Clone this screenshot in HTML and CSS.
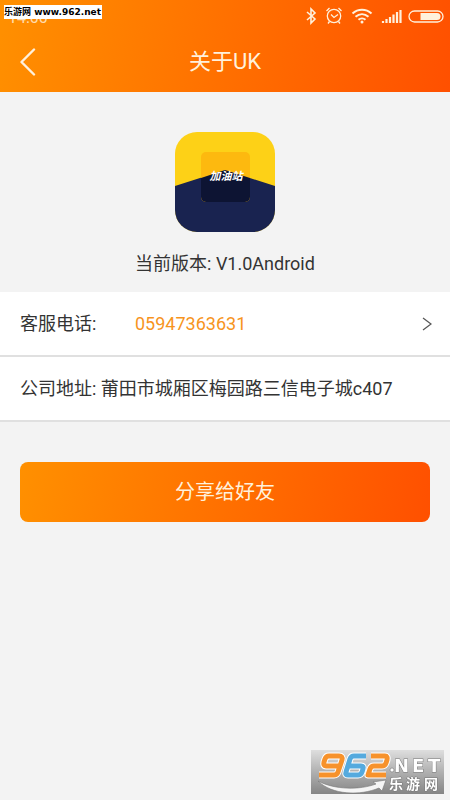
FILE: index.html
```html
<!DOCTYPE html>
<html lang="zh-CN">
<head>
<meta charset="utf-8">
<meta name="viewport" content="width=device-width, initial-scale=1">
<title>关于UK</title>
<link rel="stylesheet" href="styles.css">
</head>
<body>
<header class="header">
  <div class="status">
    <span class="clock">14:00</span>
    <svg class="status-icons" width="140" height="20" viewBox="0 0 140 20" fill="none" stroke="currentColor" aria-hidden="true">
      <path d="M3 6l8 7-4 4V3l4 4-8 7" stroke-width="1.6"/>
      <circle cx="30" cy="10" r="6.700" stroke-width="1.300"/>
      <path d="M27 8.500l3 3 4-3M22.500 5l3-3M37.500 5l-3-3M25.500 15.500l-1.500 2M34.500 15.500l1.500 2" stroke-width="1.300"/>
      <path d="M48.500 7.500c5.500-5 13.500-5 19 0M51.500 10.800c4-3.500 9-3.500 13 0M54.500 13.800c2-1.800 5-1.800 7 0" stroke-width="2"/>
      <circle cx="58" cy="16" r="1.500" fill="currentColor" stroke="none"/>
      <path d="M79 15v2M82.500 13v4M86 11v6M89.500 8.500V17M93 6v11M96.500 4v13" stroke-width="2.200"/>
      <rect x="105" y="5" width="34" height="11" rx="5.500" stroke-width="1.300"/>
      <path d="M116.500 7h16.500a3.500 3.500 0 0 1 0 7h-16.500z" fill="currentColor" stroke="none"/>
    </svg>
  </div>
  <nav class="navbar">
    <button class="back" type="button" aria-label="返回">
      <svg width="16" height="28" viewBox="0 0 16 28" fill="none" stroke="currentColor" stroke-width="2.400" stroke-linecap="round" stroke-linejoin="round"><path d="M14 1.500L1.500 14 14 26.500"/></svg>
    </button>
    <h1 class="title">关于UK</h1>
  </nav>
  <div class="site-tag">乐游网 www.962.net</div>
</header>
<main>
  <section class="about">
    <svg class="logo" width="100" height="100" viewBox="0 0 100 100" role="img" aria-label="加油站">
      <defs><clipPath id="logo-shape"><rect width="100" height="100" rx="22"/></clipPath></defs>
      <g clip-path="url(#logo-shape)">
        <path fill="#fdd117" d="M0 0h100v100H0z"/>
        <path fill="#192350" d="M0 54l50-16 50 16v46H0z"/>
        <rect x="26" y="20" width="49" height="50" rx="5" fill="#fdb90f"/>
        <path d="M26 46l24-8 25 8v19a5 5 0 0 1-5 5H31a5 5 0 0 1-5-5z" fill="#0d1433"/>
      </g>
      <text class="logo-text" x="51" y="48" text-anchor="middle">加油站</text>
    </svg>
    <p class="version">当前版本: V1.0Android</p>
  </section>
  <section class="list">
    <a class="row" href="tel:05947363631">
      <span class="label">客服电话:</span>
      <span class="phone">05947363631</span>
      <svg width="10" height="14" viewBox="0 0 10 14" fill="none" stroke="#555" stroke-width="1.200" aria-hidden="true"><path d="M1 1l8 6-8 6"/></svg>
    </a>
    <div class="row">公司地址: 莆田市城厢区梅园路三信电子城c407</div>
  </section>
  <div class="actions"><button class="share" type="button">分享给好友</button></div>
</main>
<aside class="watermark">
  <svg width="133" height="44" viewBox="0 0 133 44" role="img" aria-label="962.NET 乐游网">
    <defs>
      <linearGradient id="plate" x2="0" y2="1"><stop stop-color="#dedede"/><stop offset=".5" stop-color="#b0b0b0"/><stop offset="1" stop-color="#858585"/></linearGradient>
    </defs>
    <path fill="url(#plate)" d="M0 0h133v44H0z"/>
    <path d="M7 31c17 9 42 9 58 3l-3-2 13-2-4 11-3-3c-19 8-47 7-61-7z" fill="#f5f5f5" stroke="#777" stroke-width=".6"/>
    <g fill="none" stroke-linejoin="round">
      <g stroke="#fff" stroke-width="7">
        <path d="M28 16H15q-3 0-2-4l1-3q1-3 4-3h10q4 0 3 4l-4 12q-1 3-4 3H8"/>
        <path d="M55 6H43q-3 0-4 3l-4 13q-1 3 2 3h10q3 0 4-3l1-3q1-3-2-3H38"/>
        <path d="M60 6h14q3 0 2 4l-1 3q-1 3-4 3h-8q-3 0-4 3l-2 6h18"/>
      </g>
      <path stroke="#f7922b" stroke-width="5" d="M28 16H15q-3 0-2-4l1-3q1-3 4-3h10q4 0 3 4l-4 12q-1 3-4 3H8"/>
      <path stroke="#55aade" stroke-width="5" d="M55 6H43q-3 0-4 3l-4 13q-1 3 2 3h10q3 0 4-3l1-3q1-3-2-3H38"/>
      <path stroke="#f7922b" stroke-width="5" d="M60 6h14q3 0 2 4l-1 3q-1 3-4 3h-8q-3 0-4 3l-2 6h18"/>
    </g>
    <circle cx="81" cy="20" r="2" fill="#fff" stroke="#777" stroke-width=".6"/>
    <text class="mark-net" x="83" y="22">N</text>
    <text class="mark-net" x="101" y="22">E</text>
    <text class="mark-net" x="117" y="22">T</text>
    <text class="mark-cn" x="78" y="39">乐</text>
    <text class="mark-cn" x="95" y="39">游</text>
    <text class="mark-cn" x="113" y="39">网</text>
  </svg>
</aside>
</body>
</html>
```
FILE: styles.css
```css
* { box-sizing: border-box; }

body {
  margin: 0;
  min-height: 100vh;
  background: #f3f3f3;
  color: #333;
  font: 18px/24px Roboto, "Noto Sans CJK SC", sans-serif;
}

h1, p { margin: 0; }

button {
  border: 0;
  padding: 0;
  font: inherit;
  cursor: pointer;
}

.header {
  position: relative;
  background: linear-gradient(100deg, #ff9000, #ff5000);
  color: #fff1dc;
}

.status {
  display: flex;
  justify-content: space-between;
  align-items: center;
  height: 32px;
  padding: 0 6px 0 8px;
}

.clock { padding-top: 4px; font-size: 16px; opacity: .8; }

.navbar {
  display: grid;
  grid-template-columns: 56px 1fr 56px;
  align-items: center;
  height: 60px;
}

.back {
  display: flex;
  padding-left: 20px;
  background: none;
  color: inherit;
}

.title {
  font-size: 22px;
  font-weight: 400;
  text-align: center;
}

.site-tag {
  position: absolute;
  top: 5px;
  left: 4px;
  width: 98px;
  background: #fff;
  color: #000;
  font: bold 9px/14px "DejaVu Sans", "Noto Sans CJK SC", sans-serif;
  white-space: nowrap;
}

.about {
  display: flex;
  flex-direction: column;
  align-items: center;
  gap: 20px;
  padding: 40px 20px 16px;
}

.logo { display: block; }

.logo-text {
  fill: #fff;
  font: italic bold 11px "Noto Sans CJK SC", sans-serif;
}

.list { background: #fff; }

.row {
  display: flex;
  align-items: center;
  height: 65px;
  padding: 0 18px 0 20px;
  border-bottom: 2px solid #e0e0e0;
  color: inherit;
  text-decoration: none;
}

.label { width: 115px; }

.phone { flex: 1; color: #f7941d; }

.actions { padding: 40px 20px; }

.share {
  display: block;
  width: 100%;
  height: 60px;
  border-radius: 8px;
  background: linear-gradient(100deg, #ff9000, #ff5000);
  color: #fff1dc;
  font-size: 20px;
}

.watermark {
  position: fixed;
  right: 6px;
  bottom: 6px;
}

.watermark svg { display: block; }

.mark-net {
  fill: #fff;
  stroke: #777;
  stroke-width: 1px;
  paint-order: stroke;
  font: bold 18px "DejaVu Sans", sans-serif;
}

.mark-cn {
  fill: #fff;
  stroke: #777;
  stroke-width: 1px;
  paint-order: stroke;
  font: bold 14px "Noto Sans CJK SC", sans-serif;
}
```
